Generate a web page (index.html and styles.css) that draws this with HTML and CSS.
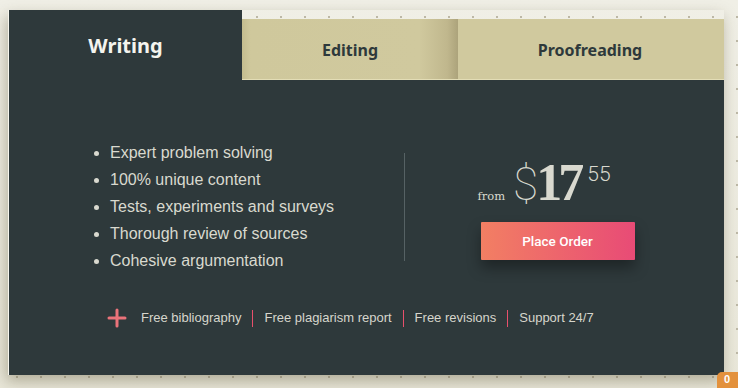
FILE: index.html
```html
<!DOCTYPE html>
<html lang="en">
<head>
  <meta charset="UTF-8">
  <meta name="viewport" content="width=device-width, initial-scale=1.0">
  <title>Pricing Tabs</title>
  <link rel="stylesheet" href="styles.css">
</head>
<body>
  <div class="price-card">
    <div class="tabs">
      <div class="tab tab-active">Writing</div>
      <div class="tab tab-editing">Editing</div>
      <div class="tab tab-proof">Proofreading</div>
    </div>

    <div class="card-body">
      <div class="offer">
        <ul class="perks">
          <li>Expert problem solving</li>
          <li>100% unique content</li>
          <li>Tests, experiments and surveys</li>
          <li>Thorough review of sources</li>
          <li>Cohesive argumentation</li>
        </ul>
        <div class="divider"></div>
        <div class="price-box">
          <div class="price">
            <span class="price-from">from</span>
            <span class="price-currency">$</span><span class="price-main">17</span><span class="price-cents">55</span>
          </div>
          <button class="order-btn">Place Order</button>
        </div>
      </div>

      <div class="extras">
        <svg class="extras-icon" width="20" height="20" viewBox="0 0 20 20">
          <path d="M10 2v16M2 10h16" stroke="#ea737a" stroke-width="3" stroke-linecap="round"/>
        </svg>
        <span class="extra">Free bibliography</span>
        <span class="sep"></span>
        <span class="extra">Free plagiarism report</span>
        <span class="sep"></span>
        <span class="extra">Free revisions</span>
        <span class="sep"></span>
        <span class="extra">Support 24/7</span>
      </div>
    </div>
  </div>

  <!-- floating chat badge peeking in from the corner -->
  <div class="chat-badge">0</div>
</body>
</html>
```

FILE: styles.css
```css
html, body {
  height: 100%;
}
body {
  margin: 0;
  padding: 10px 0 0 8px;
  box-sizing: border-box;
  overflow: hidden;
  font-family: "Liberation Sans", Arial, sans-serif;
  background-color: #eceadd;
  background-image:
    radial-gradient(circle, #bdb8a6 0.8px, transparent 1.2px),
    linear-gradient(#f0efe6, #e9e7d9);
  background-size: 24px 24px, 100% 100%;
  background-position: 5px 5px, 0 0;
}
.price-card {
  width: 716px;
  box-shadow: -2px 6px 14px rgba(70, 60, 25, 0.35);
  border-left: 1px solid #f7f6ee;
  box-sizing: border-box;
}
.tabs {
  display: flex;
  align-items: flex-end;
  height: 70px;
}
.tab {
  display: flex;
  align-items: center;
  justify-content: center;
  flex-shrink: 0;
  height: 61px;
  font-family: "Noto Sans", "Open Sans", sans-serif;
  font-weight: 700;
  font-size: 16px;
  color: #2e393b;
  background: #d0c99e;
  box-shadow: inset 0 -1px 0 #e3ddb6;
}
.tab-active {
  width: 233px;
  height: 70px;
  background: #2e393b;
  color: #f4f4ee;
  font-size: 20px;
  box-shadow: none;
}
.tab-editing {
  width: 216px;
  background: linear-gradient(to right, #c3bc8e 0, #cfc89c 4%, #d0c99e 82%, #c0b78d 95%, #aca37b 100%);
}
.tab-proof {
  width: 266px;
  padding-right: 2px;
  box-sizing: border-box;
}
.card-body {
  background: #2e393b;
  height: 295px;
  padding-top: 59px;
  box-sizing: border-box;
}
.offer {
  display: flex;
  align-items: flex-start;
}
.perks {
  flex-shrink: 0;
  width: 395px;
  margin: 0;
  padding: 0 0 0 101px;
  box-sizing: border-box;
  list-style: disc;
  color: #d9d9cf;
  font-size: 16px;
  line-height: 27px;
}
.divider {
  flex-shrink: 0;
  width: 1px;
  height: 108px;
  margin-top: 14px;
  background: #566264;
}
.price-box {
  width: 305px;
  display: flex;
  flex-direction: column;
  align-items: center;
  padding-top: 18px;
}
.price {
  display: flex;
  align-items: baseline;
  color: #d9d9cf;
  height: 62px;
  padding-right: 27px;
}
.price-from {
  font-family: "DejaVu Serif", serif;
  font-size: 11.5px;
  margin-right: 8px;
}
.price-currency {
  font-family: Roboto, sans-serif;
  font-weight: 100;
  font-size: 46px;
  line-height: 1;
  margin-right: -2px;
}
.price-main {
  font-family: "Liberation Serif", serif;
  font-weight: 700;
  font-size: 52px;
  letter-spacing: -4px;
  line-height: 1;
}
.price-cents {
  font-family: Roboto, sans-serif;
  font-weight: 300;
  font-size: 21px;
  align-self: flex-start;
  margin-left: 7px;
  margin-top: 5px;
}
.order-btn {
  width: 154px;
  height: 38px;
  margin-top: 3px;
  border: none;
  border-radius: 1px;
  background: linear-gradient(to right, #f27f63, #e84b76);
  color: #fff;
  font-family: Roboto, sans-serif;
  font-weight: 500;
  font-size: 13.5px;
  box-shadow: 0 8px 14px rgba(0, 0, 0, 0.35);
  cursor: pointer;
}
.extras {
  display: flex;
  align-items: center;
  margin-top: 34px;
  padding-left: 98px;
  color: #d6d6cc;
  font-size: 13px;
  line-height: 20px;
}
.extras-icon {
  margin-right: 14px;
}
.sep {
  height: 17px;
  margin: 0 11px;
  border-left: 1px solid #e8506c;
}
.chat-badge {
  position: absolute;
  left: 717px;
  top: 372px;
  width: 50px;
  height: 30px;
  border-radius: 5px;
  background: #e3913c;
  color: #fff;
  font-weight: 700;
  font-size: 11px;
  line-height: 13px;
  padding: 1px 0 0 7px;
  box-sizing: border-box;
}
```
